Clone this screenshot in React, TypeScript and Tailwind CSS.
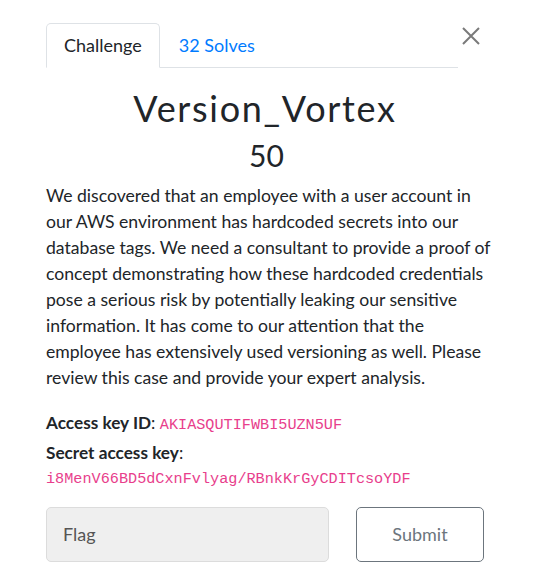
import React from "react";

const descriptionLines = [
  "We discovered that an employee with a user account in",
  "our AWS environment has hardcoded secrets into our",
  "database tags. We need a consultant to provide a proof of",
  "concept demonstrating how these hardcoded credentials",
  "pose a serious risk by potentially leaking our sensitive",
  "information. It has come to our attention that the",
  "employee has extensively used versioning as well. Please",
  "review this case and provide your expert analysis.",
];

export default function App() {
  return (
    <div className="min-h-[584px] w-[533px] bg-white font-['Lato',sans-serif] text-[#212529]">
      <div className="pl-[46px] pr-[46px] pt-[23px]">
        {/* tabs + close */}
        <div className="flex items-start">
          <div className="flex w-[412px] border-b border-[#dee2e6]">
            <div className="-mb-px rounded-t-[5px] border border-[#dee2e6] border-b-white bg-white px-[17px] pb-[10px] pt-[9px] text-[18px] leading-[24px]">
              Challenge
            </div>
            <div className="px-[19px] pb-[10px] pt-[10px] text-[18px] leading-[24px] text-[#007bff]">
              32 Solves
            </div>
          </div>
          <button className="ml-[1px] mt-[1px] flex h-[24px] w-[24px] items-center justify-center text-[#7a7a7a]">
            <svg width="20" height="20" viewBox="0 0 20 20" fill="none" stroke="currentColor" strokeWidth="2">
              <path d="M2 2 L18 18 M18 2 L2 18" />
            </svg>
          </button>
        </div>

        <h2 className="mt-[18px] pr-[3px] text-center text-[36px] leading-[44px] tracking-[1.7px]">Version_Vortex</h2>
        <h3 className="mt-[7px] text-center text-[30px] leading-[36px]">50</h3>

        <p className="mr-[-30px] mt-[10px] text-[17.6px] leading-[26px]">
          {descriptionLines.map((line, i) => (
            <span key={i} className="block whitespace-nowrap">
              {line}
            </span>
          ))}
        </p>

        <div className="mt-[18px] text-[17.2px] leading-[27px]">
          <div>
            <span className="font-bold">Access key ID</span>:{" "}
            <code className="font-['Liberation_Mono',monospace] text-[15.2px] text-[#e83e8c]">AKIASQUTIFWBI5UZN5UF</code>
          </div>
          <div>
            <span className="font-bold">Secret access key</span>:
          </div>
          <div className="font-['Liberation_Mono',monospace] text-[15.2px] leading-[27px] text-[#e83e8c]">
            i8MenV66BD5dCxnFvlyag/RBnkKrGyCDITcsoYDF
          </div>
        </div>

        <div className="mt-[14px] flex gap-[27px]">
          <div className="flex h-[55px] w-[283px] items-center rounded-[5px] border border-[#dcdcdc] bg-[#efefef] px-[16px] text-[18px] text-[#555]">
            Flag
          </div>
          <button className="h-[55px] w-[128px] rounded-[5px] border border-[#6c757d] bg-white text-[18px] text-[#6c757d]">
            Submit
          </button>
        </div>
      </div>
    </div>
  );
}
